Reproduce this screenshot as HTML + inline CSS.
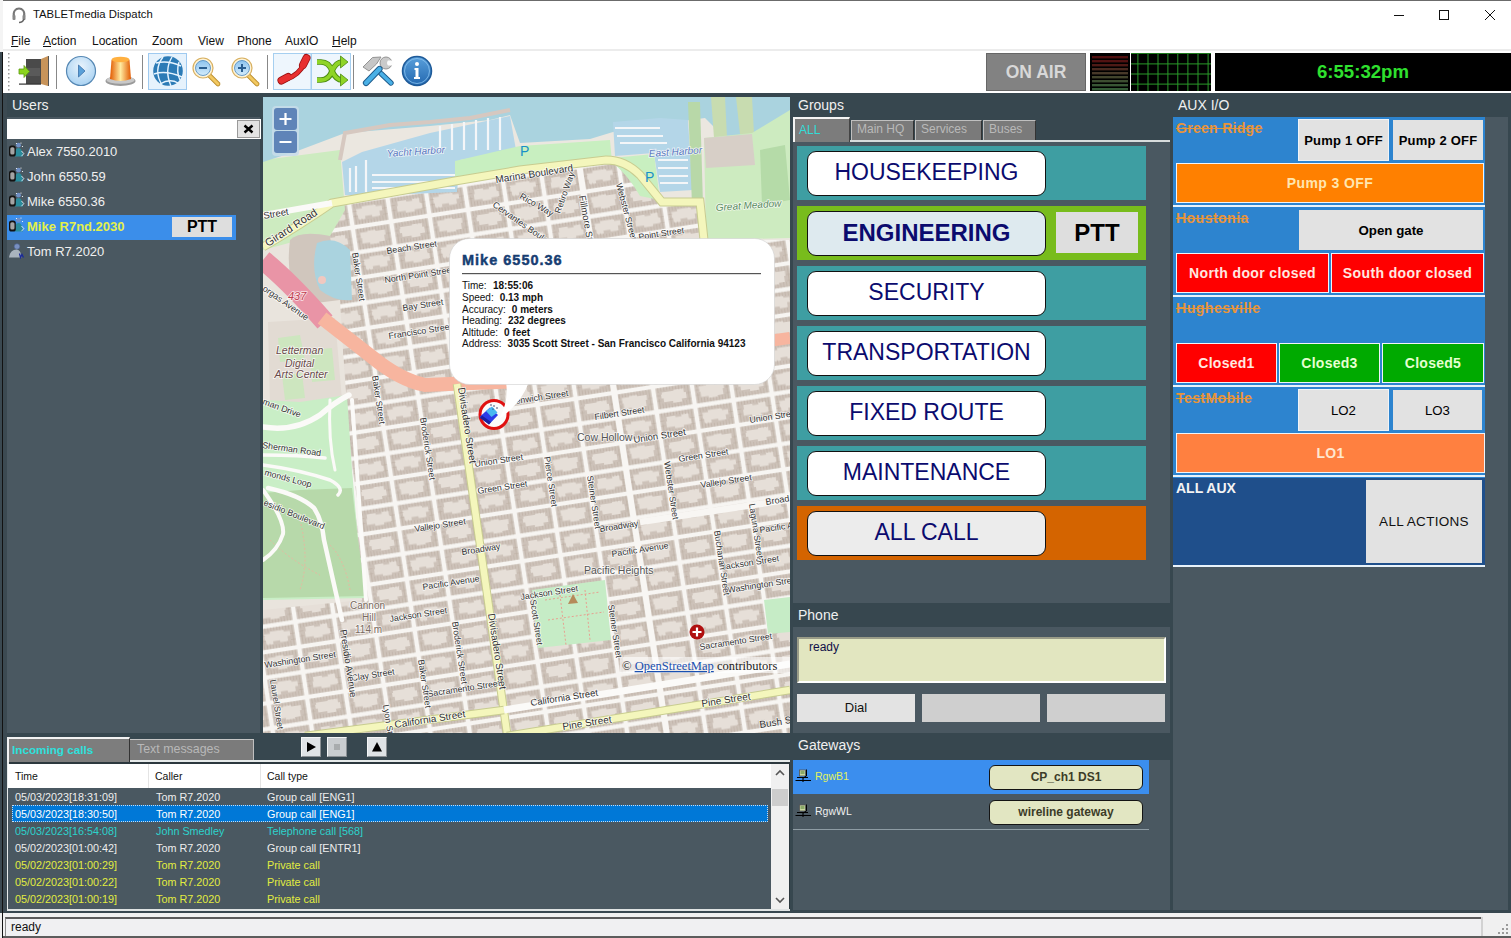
<!DOCTYPE html>
<html><head><meta charset="utf-8">
<style>
*{margin:0;padding:0;box-sizing:border-box}
html,body{width:1511px;height:938px;overflow:hidden;background:#3a4a52;font-family:"Liberation Sans",sans-serif}
.a{position:absolute}
.t{position:absolute;white-space:nowrap;line-height:1}
#win{position:absolute;left:3px;top:0;width:1508px;height:938px;background:#fff;border-top:1px solid #6b6b6b}
.hdr{position:absolute;background:#37474f;color:#f2f2f2;font-size:13px}
.pnl{position:absolute;background:#4a5861}
.gbtn{position:absolute;background:#fff;border:1px solid #111;border-radius:9px;color:#0b0b6e;font-size:23px;text-align:center}
.grow{position:absolute;left:797px;width:349px;height:54px;background:#3c9ea0}
.aux{position:absolute;font-family:"Liberation Sans",sans-serif;font-weight:bold;font-size:13px;text-align:center}
.lbl{position:absolute;color:#e8943a;font-weight:bold;font-size:13px;text-decoration:line-through;white-space:nowrap}
.row{position:absolute;left:8px;width:762px;height:17px;font-size:10px;color:#f0f0f0}
.row span{position:absolute;top:3px;white-space:nowrap}
</style></head><body>
<div id="win"></div>
<!-- left outside strip -->
<div class="a" style="left:0;top:0;width:3px;height:52px;background:#f4f4f4"></div>
<div class="a" style="left:0;top:52px;width:2px;height:861px;background:#3b4951"></div><div class="a" style="left:0;top:913px;width:2px;height:25px;background:#eeeeee"></div><div class="a" style="left:2px;top:52px;width:1px;height:886px;background:#121212"></div>

<!-- title bar -->
<svg class="a" style="left:11px;top:7px" width="16" height="17" viewBox="0 0 16 17">
<path d="M3 10 C1.5 4 5 1.5 8 1.5 C11 1.5 14.5 4 13 10" fill="none" stroke="#777" stroke-width="2"/>
<rect x="1.5" y="8" width="3" height="5" rx="1" fill="#888"/><rect x="11.5" y="8" width="3" height="5" rx="1" fill="#888"/>
<path d="M13 12 C12 15 10 15.5 8 15.5" fill="none" stroke="#666" stroke-width="1.5"/>
</svg>
<div class="t" style="left:33px;top:9px;font-size:11.3px;color:#111">TABLETmedia Dispatch</div>
<div class="a" style="left:1394px;top:15px;width:10px;height:1px;background:#111"></div>
<div class="a" style="left:1439px;top:10px;width:10px;height:10px;border:1px solid #111"></div>
<svg class="a" style="left:1484px;top:9px" width="13" height="13"><path d="M1 1L11 11M11 1L1 11" stroke="#111" stroke-width="1"/></svg>

<!-- menu -->
<div class="t" style="left:11px;top:35px;font-size:12px;color:#111"><u>F</u>ile</div>
<div class="t" style="left:43px;top:35px;font-size:12px;color:#111"><u>A</u>ction</div>
<div class="t" style="left:92px;top:35px;font-size:12px;color:#111">Location</div>
<div class="t" style="left:152px;top:35px;font-size:12px;color:#111">Zoom</div>
<div class="t" style="left:198px;top:35px;font-size:12px;color:#111">View</div>
<div class="t" style="left:237px;top:35px;font-size:12px;color:#111">Phone</div>
<div class="t" style="left:285px;top:35px;font-size:12px;color:#111">AuxIO</div>
<div class="t" style="left:332px;top:35px;font-size:12px;color:#111"><u>H</u>elp</div>
<div class="a" style="left:3px;top:49px;width:1508px;height:2px;background:#ececec"></div>

<!-- toolbar -->
<svg class="a" style="left:0;top:51px" width="440" height="41" viewBox="0 51 440 41">
<defs>
<radialGradient id="gPlay" cx="0.5" cy="0.35" r="0.65"><stop offset="0" stop-color="#e8f3fc"/><stop offset="1" stop-color="#a9d2f2"/></radialGradient>
<linearGradient id="gAl" x1="0" x2="1"><stop offset="0" stop-color="#e25a00"/><stop offset="0.5" stop-color="#ffeaa0"/><stop offset="1" stop-color="#e25a00"/></linearGradient>
<linearGradient id="gLens" x1="0" y1="0" x2="0" y2="1"><stop offset="0" stop-color="#8ec4ef"/><stop offset="1" stop-color="#d2ebfb"/></linearGradient>
<linearGradient id="gInfo" x1="0" y1="0" x2="0" y2="1"><stop offset="0" stop-color="#5aa0dc"/><stop offset="1" stop-color="#2368b0"/></linearGradient>
</defs>
<g fill="#9a9a9a"><rect x="8" y="53" width="1.5" height="1.5"/><rect x="8" y="57" width="1.5" height="1.5"/><rect x="8" y="61" width="1.5" height="1.5"/><rect x="8" y="65" width="1.5" height="1.5"/><rect x="8" y="69" width="1.5" height="1.5"/><rect x="8" y="73" width="1.5" height="1.5"/><rect x="8" y="77" width="1.5" height="1.5"/><rect x="8" y="81" width="1.5" height="1.5"/><rect x="8" y="85" width="1.5" height="1.5"/><rect x="8" y="89" width="1.5" height="1.5"/></g>
<!-- door -->
<rect x="26" y="59" width="15" height="25" fill="#4a4a4a"/>
<rect x="27" y="68" width="13" height="8" fill="#5a5a5a"/>
<path d="M41 59 L48 56 L48 86 L41 84 Z" fill="#c8945a"/>
<path d="M48 56 L49 56 L49 86 L48 86Z" fill="#555"/>
<rect x="19" y="83.5" width="22" height="1.2" fill="#333"/>
<path d="M19 69 L24 69 L24 65.5 L29.5 71.5 L24 77.5 L24 74 L19 74 Z" fill="#8cd41e" stroke="#5a9a10" stroke-width="0.8"/>
<rect x="56" y="55" width="1" height="34" fill="#888"/>
<!-- play -->
<circle cx="81" cy="71" r="14.5" fill="url(#gPlay)" stroke="#5688b4" stroke-width="1.2"/>
<path d="M78.5 65 L85 71 L78.5 77 Z" fill="#5aa0d8" stroke="#3a70a8" stroke-width="0.8"/>
<!-- alarm -->
<ellipse cx="120.5" cy="81" rx="15" ry="5" fill="#9a9a9a"/>
<ellipse cx="120.5" cy="80" rx="14" ry="3.8" fill="#c8c8c8"/>
<path d="M110 79 L111.5 60 Q120.5 55 129.5 60 L131 79 Q120.5 83 110 79Z" fill="url(#gAl)"/>
<ellipse cx="120.5" cy="59.5" rx="9" ry="2.8" fill="#ffb040"/>
<rect x="142" y="55" width="1" height="34" fill="#888"/>
<!-- globe box -->
<rect x="148.5" y="53.5" width="38" height="36" fill="#e6f2fc" stroke="#9fcaf0"/>
<circle cx="168" cy="71" r="14.8" fill="#2c7bb6"/>
<g fill="none" stroke="#e6f4ff" stroke-width="1.4">
<path d="M156 63 Q168 60 181 66"/><path d="M154 74 Q166 70 182 77"/><path d="M160 84 Q170 78 178 83"/>
<path d="M163 57 Q153 70 162 85"/><path d="M172 57 Q164 70 171 86"/><path d="M179 62 Q176 72 180 80"/>
</g>
<!-- zoom out -->
<path d="M208.5 74.5 L218 84" stroke="#b88a28" stroke-width="4.6" stroke-linecap="round"/>
<path d="M208.5 74.5 L218 84" stroke="#f2c860" stroke-width="3" stroke-linecap="round"/>
<circle cx="203" cy="68" r="10" fill="#fdf3d8" stroke="#d8b060" stroke-width="1.2"/>
<circle cx="203" cy="68" r="7.5" fill="url(#gLens)" stroke="#4a88c0" stroke-width="0.8"/>
<rect x="199" y="67" width="8" height="2" fill="#2a5e90"/>
<!-- zoom in -->
<path d="M247.5 74.5 L257 84" stroke="#b88a28" stroke-width="4.6" stroke-linecap="round"/>
<path d="M247.5 74.5 L257 84" stroke="#f2c860" stroke-width="3" stroke-linecap="round"/>
<circle cx="242" cy="68" r="10" fill="#fdf3d8" stroke="#d8b060" stroke-width="1.2"/>
<circle cx="242" cy="68" r="7.5" fill="url(#gLens)" stroke="#4a88c0" stroke-width="0.8"/>
<rect x="238" y="67" width="8" height="2" fill="#2a5e90"/><rect x="241" y="64" width="2" height="8" fill="#2a5e90"/>
<rect x="267" y="55" width="1" height="34" fill="#888"/>
<!-- phone/shuffle boxes -->
<rect x="273.5" y="53.5" width="37.5" height="36" fill="#eef6fd" stroke="#a6cff0"/>
<rect x="311.5" y="53.5" width="39" height="36" fill="#eef6fd" stroke="#a6cff0"/>
<g stroke-linecap="round" fill="none">
<path d="M285 79.5 Q299 76 305 62" stroke="#9a1010" stroke-width="5"/>
<path d="M281.5 80.5 L288 77" stroke="#9a1010" stroke-width="8"/>
<path d="M303 65 L306.5 58" stroke="#9a1010" stroke-width="8"/>
<path d="M285 79.5 Q299 76 305 62" stroke="#e83030" stroke-width="3.4"/>
<path d="M281.5 80.5 L288 77" stroke="#e83030" stroke-width="6.4"/>
<path d="M303 65 L306.5 58" stroke="#e83030" stroke-width="6.4"/>
</g>
<g fill="none" stroke-linecap="butt">
<path d="M317 62 H321 Q329 62 332 71 Q336 80 342 80" stroke="#4a8a10" stroke-width="5.6"/>
<path d="M317 80 H321 Q329 80 332 71 Q336 62 342 62" stroke="#4a8a10" stroke-width="5.6"/>
<path d="M317 62 H321 Q329 62 332 71 Q336 80 342 80" stroke="#8fd426" stroke-width="3.8"/>
<path d="M317 80 H321 Q329 80 332 71 Q336 62 342 62" stroke="#8fd426" stroke-width="3.8"/>
</g>
<path d="M340.5 56 L348 62 L340.5 68 Z M340.5 74 L348 80 L340.5 86 Z" fill="#8fd426" stroke="#4a8a10" stroke-width="0.8"/>
<rect x="353" y="55" width="1" height="34" fill="#888"/>
<!-- tools -->
<path d="M386.5 64 Q382 60 384 58" fill="none" stroke="#888" stroke-width="0.8"/>
<circle cx="386" cy="63" r="6" fill="#cacaca" stroke="#8a8a8a" stroke-width="0.9"/>
<path d="M388 60.5 L393.5 60.5 L393.5 65.5 L388 65.5 Q386 63 388 60.5Z" fill="#fdfdfd"/>
<path d="M381 73.5 L391 83" stroke="#1e5a8a" stroke-width="5.4" stroke-linecap="round"/>
<path d="M381 73.5 L391 83" stroke="#4ab0e6" stroke-width="3.6" stroke-linecap="round"/>
<path d="M366 83 L379.5 69" stroke="#1e5a8a" stroke-width="6.2" stroke-linecap="round"/>
<path d="M366 83 L379.5 69" stroke="#4ab0e6" stroke-width="4.4" stroke-linecap="round"/>
<path d="M363 67 L372.5 57.5 L381 57 L376.5 64 L369 71 Z" fill="#c6c6c6" stroke="#8a8a8a" stroke-width="0.9"/>
<!-- info -->
<circle cx="417" cy="71" r="14.5" fill="url(#gInfo)" stroke="#1e5a98" stroke-width="1.5"/>
<circle cx="417" cy="71" r="12.5" fill="none" stroke="#8cc4f0" stroke-width="0.8"/>
<circle cx="417" cy="64" r="2" fill="#fff"/>
<path d="M414.5 68 L418.5 68 L418.5 77 L420 77 L420 79 L414 79 L414 77 L415.5 77 L415.5 70 L414.5 70Z" fill="#fff"/>
</svg>

<!-- ON AIR / meters / clock -->
<div class="a" style="left:986px;top:53px;width:100px;height:38px;background:#828282;border:1px solid #666;color:#d8d8d8;font-weight:bold;font-size:17.5px;text-align:center;line-height:36px">ON AIR</div>
<svg class="a" style="left:1090px;top:53px" width="40" height="38"><rect width="40" height="38" fill="#000"/><rect x="2" y="3" width="36" height="2.4" fill="#4e0e0e"/><rect x="2" y="7" width="36" height="2.4" fill="#521212"/><rect x="2" y="11" width="36" height="2.4" fill="#4e1a16"/><rect x="2" y="15" width="36" height="2.4" fill="#4a2a20"/><rect x="2" y="19" width="36" height="2.4" fill="#463828"/><rect x="2" y="23" width="36" height="2.4" fill="#42442c"/><rect x="2" y="27" width="36" height="2.4" fill="#3c4e30"/><rect x="2" y="31" width="36" height="2.4" fill="#385634"/><rect x="2" y="35" width="36" height="2.4" fill="#345c36"/></svg>
<svg class="a" style="left:1131px;top:53px" width="80" height="38"><rect width="80" height="38" fill="#000"/><rect x="6.4" y="0" width="1" height="38" fill="#2a9a2a"/><rect x="16.5" y="0" width="1" height="38" fill="#2a9a2a"/><rect x="26.5" y="0" width="1" height="38" fill="#2a9a2a"/><rect x="36.4" y="0" width="1" height="38" fill="#2a9a2a"/><rect x="46.3" y="0" width="1" height="38" fill="#2a9a2a"/><rect x="56.4" y="0" width="1" height="38" fill="#2a9a2a"/><rect x="66.5" y="0" width="1" height="38" fill="#2a9a2a"/><rect x="76.6" y="0" width="1" height="38" fill="#2a9a2a"/><rect x="0" y="10.4" width="80" height="1" fill="#2a9a2a"/><rect x="0" y="20.5" width="80" height="1" fill="#2a9a2a"/><rect x="0" y="30.6" width="80" height="1" fill="#2a9a2a"/><rect x="0" y="0" width="80" height="1" fill="#1f7a1f"/></svg>
<div class="a" style="left:1215px;top:53px;width:296px;height:38px;background:#000;color:#2fe02f;font-weight:bold;font-size:18.6px;text-align:center;line-height:38px;padding-right:0">6:55:32pm</div>

<!-- main dark area -->

<div class="a" style="left:3px;top:93px;width:1508px;height:820px;background:#37474f"></div><div class="a" style="left:3px;top:93px;width:4px;height:820px;background:#3c4a52"></div>

<!-- Users panel -->
<div class="t" style="left:12px;top:98px;font-size:14px;color:#f0f0f0">Users</div>
<div class="pnl" style="left:7px;top:117px;width:253px;height:616px"></div>
<div class="a" style="left:7px;top:119px;width:254px;height:20px;background:#fff"></div>
<div class="a" style="left:237px;top:120px;width:23px;height:18px;background:#e4e4e4;border:1px solid #9a9a9a"></div>
<svg class="a" style="left:243px;top:124px" width="11" height="10"><path d="M1.5 1.5L9.5 8.5M9.5 1.5L1.5 8.5" stroke="#000" stroke-width="2.4"/></svg>
<div class="a" style="left:7px;top:215px;width:229px;height:25px;background:#3b8eea"></div>
<div class="a" style="left:172px;top:217px;width:60px;height:20px;background:#dedede;color:#000;font-weight:bold;font-size:16px;text-align:center;line-height:20px">PTT</div>
<svg class="a" style="left:8px;top:142px" width="17" height="17" viewBox="0 0 17 17">
<circle cx="10.5" cy="3.2" r="2.4" fill="#6f8fc4"/>
<path d="M6.5 14.5 Q6.5 6 10.5 6 Q14.5 6 15 14.5Z" fill="#2a8c9c"/>
<path d="M13.5 9 L15.8 11.6 L13.5 14.2" fill="none" stroke="#e6eefa" stroke-width="0.9"/>
<rect x="1" y="3.5" width="6.8" height="11" rx="2.6" fill="#121212"/>
<rect x="2.3" y="5.2" width="4.2" height="7.3" rx="1.6" fill="#a4a4a4"/>
<circle cx="8.5" cy="1.5" r="0.6" fill="#fff"/><circle cx="13" cy="1" r="0.6" fill="#fff"/><circle cx="14.5" cy="4.5" r="0.6" fill="#fff"/>
</svg>
<div class="t" style="left:27px;top:145px;font-size:13px;color:#f0f0f0">Alex 7550.2010</div>
<svg class="a" style="left:8px;top:167px" width="17" height="17" viewBox="0 0 17 17">
<circle cx="10.5" cy="3.2" r="2.4" fill="#6f8fc4"/>
<path d="M6.5 14.5 Q6.5 6 10.5 6 Q14.5 6 15 14.5Z" fill="#2a8c9c"/>
<path d="M13.5 9 L15.8 11.6 L13.5 14.2" fill="none" stroke="#e6eefa" stroke-width="0.9"/>
<rect x="1" y="3.5" width="6.8" height="11" rx="2.6" fill="#121212"/>
<rect x="2.3" y="5.2" width="4.2" height="7.3" rx="1.6" fill="#a4a4a4"/>
<circle cx="8.5" cy="1.5" r="0.6" fill="#fff"/><circle cx="13" cy="1" r="0.6" fill="#fff"/><circle cx="14.5" cy="4.5" r="0.6" fill="#fff"/>
</svg>
<div class="t" style="left:27px;top:170px;font-size:13px;color:#f0f0f0">John 6550.59</div>
<svg class="a" style="left:8px;top:192px" width="17" height="17" viewBox="0 0 17 17">
<circle cx="10.5" cy="3.2" r="2.4" fill="#6f8fc4"/>
<path d="M6.5 14.5 Q6.5 6 10.5 6 Q14.5 6 15 14.5Z" fill="#2a8c9c"/>
<path d="M13.5 9 L15.8 11.6 L13.5 14.2" fill="none" stroke="#e6eefa" stroke-width="0.9"/>
<rect x="1" y="3.5" width="6.8" height="11" rx="2.6" fill="#121212"/>
<rect x="2.3" y="5.2" width="4.2" height="7.3" rx="1.6" fill="#a4a4a4"/>
<circle cx="8.5" cy="1.5" r="0.6" fill="#fff"/><circle cx="13" cy="1" r="0.6" fill="#fff"/><circle cx="14.5" cy="4.5" r="0.6" fill="#fff"/>
</svg>
<div class="t" style="left:27px;top:195px;font-size:13px;color:#f0f0f0">Mike 6550.36</div>
<svg class="a" style="left:8px;top:217px" width="17" height="17" viewBox="0 0 17 17">
<circle cx="10.5" cy="3.2" r="2.4" fill="#6f8fc4"/>
<path d="M6.5 14.5 Q6.5 6 10.5 6 Q14.5 6 15 14.5Z" fill="#2a8c9c"/>
<path d="M13.5 9 L15.8 11.6 L13.5 14.2" fill="none" stroke="#e6eefa" stroke-width="0.9"/>
<rect x="1" y="3.5" width="6.8" height="11" rx="2.6" fill="#121212"/>
<rect x="2.3" y="5.2" width="4.2" height="7.3" rx="1.6" fill="#a4a4a4"/>
<circle cx="8.5" cy="1.5" r="0.6" fill="#fff"/><circle cx="13" cy="1" r="0.6" fill="#fff"/><circle cx="14.5" cy="4.5" r="0.6" fill="#fff"/>
</svg>
<div class="t" style="left:27px;top:220px;font-size:13px;font-weight:bold;color:#e4f04a">Mike R7nd.2030</div>
<svg class="a" style="left:8px;top:242px" width="17" height="17" viewBox="0 0 17 17">
<circle cx="9" cy="4.5" r="2.8" fill="#7890c0" stroke="#4a6090" stroke-width="0.6"/>
<path d="M1 15.5 Q2 8 8.5 7.5 Q13 8 13.5 15.5Z" fill="#aab4be"/>
<path d="M11.5 11.5 L12.5 15.5 L14 12.5 L15.5 15.5" fill="none" stroke="#1a2a9a" stroke-width="1.3"/>
</svg>
<div class="t" style="left:27px;top:245px;font-size:13px;color:#f0f0f0">Tom R7.2020</div>

<!-- Map -->
<!--MAP-->
<svg class="a" style="left:263px;top:97px" width="527" height="636" viewBox="263 97 527 636" font-family="Liberation Sans, sans-serif">
<defs>
<pattern id="blk" patternUnits="userSpaceOnUse" width="77.8" height="50.8" patternTransform="translate(622 443) rotate(-8.75)">
<rect width="77.8" height="50.8" fill="#f7f5f2"/>
<rect x="2.3" y="2.2" width="34.3" height="21.0" fill="#cdc2b9"/>
<path transform="translate(0 0)" d="M6.5 6.5 H14 V5.5 H22 V7 H31.5 V12 H30 V18 H24 V19.5 H15 V17.5 H7.5 V12 H6.5Z" fill="#e6dfd8"/>
<path transform="translate(0 0)" d="M4.5 2.2 V7 M7.5 2.2 V6 M10.5 2.2 V6 M13.5 2.2V5.5 M16.5 2.2V5.5 M19.5 2.2V5.5 M22.5 2.2V6 M25.5 2.2V6.5 M28.5 2.2V6.5 M31.5 2.2V6.5 M34.5 2.2V23.2 M4.5 13V23.2 M7.5 18V23.2 M10.5 18V23.2 M13.5 19V23.2 M16.5 19.5V23.2 M19.5 19.5V23.2 M22.5 19.5V23.2 M25.5 19V23.2 M28.5 18V23.2 M31.5 18V23.2 M2.5 10 H6.5 M2.5 15 H6.5 M32 11 H36.5 M32 17 H36.5" stroke="#bdafa4" stroke-width="0.6"/>
<rect x="41.2" y="2.2" width="34.3" height="21.0" fill="#cdc2b9"/>
<path transform="translate(38.9 0)" d="M8 7 H20 V6 H30 V10 H32 V16 H27 V19 H18 V17 H9 V13 H7 V9 H8Z" fill="#e6dfd8"/>
<path transform="translate(38.9 0)" d="M4.5 2.2 V7 M7.5 2.2 V6 M10.5 2.2 V6 M13.5 2.2V5.5 M16.5 2.2V5.5 M19.5 2.2V5.5 M22.5 2.2V6 M25.5 2.2V6.5 M28.5 2.2V6.5 M31.5 2.2V6.5 M34.5 2.2V23.2 M4.5 13V23.2 M7.5 18V23.2 M10.5 18V23.2 M13.5 19V23.2 M16.5 19.5V23.2 M19.5 19.5V23.2 M22.5 19.5V23.2 M25.5 19V23.2 M28.5 18V23.2 M31.5 18V23.2 M2.5 10 H6.5 M2.5 15 H6.5 M32 11 H36.5 M32 17 H36.5" stroke="#bdafa4" stroke-width="0.6"/>
<rect x="2.3" y="27.6" width="34.3" height="21.0" fill="#cdc2b9"/>
<path transform="translate(0 25.4)" d="M6 8 H12 V6 H26 V8 H32 V13 H29 V18 H21 V16 H14 V19 H7 V14 H6Z" fill="#e6dfd8"/>
<path transform="translate(0 25.4)" d="M4.5 2.2 V7 M7.5 2.2 V6 M10.5 2.2 V6 M13.5 2.2V5.5 M16.5 2.2V5.5 M19.5 2.2V5.5 M22.5 2.2V6 M25.5 2.2V6.5 M28.5 2.2V6.5 M31.5 2.2V6.5 M34.5 2.2V23.2 M4.5 13V23.2 M7.5 18V23.2 M10.5 18V23.2 M13.5 19V23.2 M16.5 19.5V23.2 M19.5 19.5V23.2 M22.5 19.5V23.2 M25.5 19V23.2 M28.5 18V23.2 M31.5 18V23.2 M2.5 10 H6.5 M2.5 15 H6.5 M32 11 H36.5 M32 17 H36.5" stroke="#bdafa4" stroke-width="0.6"/>
<rect x="41.2" y="27.6" width="34.3" height="21.0" fill="#cdc2b9"/>
<path transform="translate(38.9 25.4)" d="M9 6.5 H18 V8 H24 V6 H31 V11 H33 V17 H25 V19 H16 V17 H8 V11 H9Z" fill="#e6dfd8"/>
<path transform="translate(38.9 25.4)" d="M4.5 2.2 V7 M7.5 2.2 V6 M10.5 2.2 V6 M13.5 2.2V5.5 M16.5 2.2V5.5 M19.5 2.2V5.5 M22.5 2.2V6 M25.5 2.2V6.5 M28.5 2.2V6.5 M31.5 2.2V6.5 M34.5 2.2V23.2 M4.5 13V23.2 M7.5 18V23.2 M10.5 18V23.2 M13.5 19V23.2 M16.5 19.5V23.2 M19.5 19.5V23.2 M22.5 19.5V23.2 M25.5 19V23.2 M28.5 18V23.2 M31.5 18V23.2 M2.5 10 H6.5 M2.5 15 H6.5 M32 11 H36.5 M32 17 H36.5" stroke="#bdafa4" stroke-width="0.6"/>
</pattern>
</defs>
<!-- base city -->
<rect x="263" y="97" width="527" height="636" fill="url(#blk)"/>

<!-- Presidio / Letterman area left -->
<path d="M263 250 L300 238 L330 236 L340 300 L343 350 L348 420 L354 500 L362 600 L263 610 Z" fill="#e9e4dd"/>
<path d="M268 322 L335 318 L342 400 L270 405Z" fill="#e2dbd3"/>
<path d="M278 338 L300 335 L305 360 L280 362Z M310 350 L332 348 L335 380 L312 382Z M282 375 L302 373 L305 398 L285 400Z" fill="#cde6bf"/>
<path d="M263 400 L300 402 L347 395 L352 470 L358 540 L365 598 L263 600 Z" fill="#c9eec6"/>
<path d="M263 493 L300 490 L352 488 L358 540 L366 596 L263 598 Z" fill="#b7d9aa"/>
<path d="M300 520 Q310 560 300 590 M270 540 Q290 560 320 575 M330 545 Q345 560 350 590" fill="none" stroke="#e8b8a0" stroke-width="1" stroke-dasharray="2 2"/>
<g fill="none" stroke="#fbfaf8" stroke-linecap="round">
<path d="M263 427 Q295 432 320 415 Q335 402 349 395" stroke-width="5.5"/>
<path d="M263 455 Q300 455 325 458" stroke-width="3.5"/>
<path d="M263 465 Q300 470 330 480 Q345 488 338 495" stroke-width="3.5"/>
<path d="M268 488 Q300 495 314 508 Q322 520 324 540 L342 620" stroke-width="4.5"/>
<path d="M263 490 Q285 520 283 534 Q278 550 263 560" stroke-width="4"/>
<path d="M330 400 Q328 440 335 470" stroke-width="3"/>
<path d="M352 400 L366 600" stroke-width="4"/>
</g>
<path d="M263 150 L345 128 L430 120 L510 108 L520 140 L613 128 L705 112 L790 110 L790 240 L704 240 L700 202 L662 202 L640 175 L606 160 L520 170 L455 181 L332 203 L263 215 Z" fill="#ebe7e0"/>
<!-- top-left park and palace of fine arts -->
<path d="M263 160 L340 150 L345 210 L330 236 L300 240 L263 250 Z" fill="#cdebc0"/>
<path d="M290 240 Q300 230 330 236 L340 300 L300 305 Q285 280 290 240Z" fill="#d0c6bd"/>
<path d="M317 243 Q335 235 350 250 L352 300 Q335 302 320 290 Q310 270 317 243Z" fill="#aad3df"/>
<circle cx="322" cy="280" r="4" fill="#f0c8c0"/>

<!-- water top -->
<path d="M263 97 H790 V140 L752 134 L725 138 L705 118 L690 120 L613 132 L590 139 L520 143 L510 115 L490 120 L430 126 L345 133 L300 150 L263 162 Z" fill="#aad3df"/>
<!-- yacht harbor -->
<path d="M342 162 L362 152 L430 133 L510 116 L516 150 L460 160 L457 192 L362 196 L345 195 Z" fill="#b4d6e8"/>
<g stroke="#f4f6f8" stroke-width="2.2">
<path d="M372 175 H455 M372 182 H455 M372 188 H455 M440 126 V150 M452 124 V150 M464 122 V150 M476 120 V150 M488 118 V150 M500 117 V150 M350 168 V192 M356 166 V192 M366 160 V192"/>
</g>
<path d="M340 160 L345 133 L390 125 L430 122 L470 118 L510 110" fill="none" stroke="#d6c8c0" stroke-width="4"/>
<!-- marina green -->
<path d="M455 161 L520 146 L610 140 L612 162 L455 180 Z" fill="#c8efc0"/>
<!-- east harbor -->
<path d="M613 122 L660 118 L688 120 L690 152 L654 153 L615 156 Z" fill="#b4d6e8"/>
<path d="M654 154 L690 152 L693 190 L660 192 Z" fill="#b4d6e8"/>
<path d="M612 158 L654 154 L660 200 L640 196 Q628 175 612 162Z" fill="#c8efc0"/>
<g stroke="#f4f6f8" stroke-width="2.2"><path d="M615 128 H660 M617 136 H663 M620 143 H667 M658 160 H688 M658 168 H688 M659 176 H688 M660 183 H688"/></g>
<path d="M688 102 L700 102 L703 205 L692 205Z" fill="#b8d8a8"/>
<path d="M711 97 L725 97 L727 138 L714 138Z" fill="#c8dcb0"/>
<path d="M736 97 L752 97 L754 134 L740 134Z" fill="#c8dcb0"/>
<!-- great meadow -->
<path d="M704 138 L752 133 L790 110 V238 L706 240 Z" fill="#cdebc0"/>
<path d="M704 138 L752 134 L755 165 L706 168Z" fill="#d7cfc7"/>
<path d="M760 150 L785 145 L790 200 L762 205Z" fill="#b5dba8"/>

<!-- street grid lighter strips + Fillmore -->
<path d="M579.5 167 L666.7 733" stroke="#f8f6f3" stroke-width="6"/>
<path d="M640 522 L790 499.5" stroke="#f8f6f3" stroke-width="6.5"/>
<!-- route 437 -->
<path d="M263 260 Q290 282 325 322" fill="none" stroke="#e994a6" stroke-width="20"/>
<path d="M322 318 L372 357 Q400 380 425 385 L520 381" fill="none" stroke="#f7b59f" stroke-width="14"/>
<path d="M740 345 L790 338" stroke="#f7b59f" stroke-width="12"/>
<!-- Marina blvd / Girard -->
<path d="M263 247 Q300 225 332 203 L455 181 L520 170 L606 160 Q625 160 640 175 L662 202 L700 202 L704 240" fill="none" stroke="#c8cc90" stroke-width="9"/>
<path d="M263 247 Q300 225 332 203 L455 181 L520 170 L606 160 Q625 160 640 175 L662 202 L700 202 L704 240" fill="none" stroke="#f4f6bc" stroke-width="7"/>
<path d="M263 215 L332 203" stroke="#fbfaf8" stroke-width="6"/>
<!-- Divisadero -->
<path d="M457 384 L507 733" stroke="#c8cc90" stroke-width="8.5"/>
<path d="M457 384 L507 733" stroke="#f4f6bc" stroke-width="6.5"/>
<!-- California / Pine -->
<path d="M305 736 L504 710" stroke="#c8cc90" stroke-width="8.5"/>
<path d="M305 736 L504 710" stroke="#f4f6bc" stroke-width="6.5"/>
<path d="M504 710 L790 664" stroke="#fbfaf8" stroke-width="7"/>
<path d="M507 736 L790 690" stroke="#c8cc90" stroke-width="8.5"/>
<path d="M507 736 L790 690" stroke="#f4f6bc" stroke-width="6.5"/>
<!-- Alta plaza -->
<path d="M532 590 L605 580 L611 640 L538 648 Z" fill="#c6ecc6"/>
<path d="M545 600 L600 592 M548 620 L604 612 M560 595 L566 645 M585 590 L590 640" stroke="#e8a090" stroke-width="1" stroke-dasharray="2 2" fill="none"/>
<path d="M568 604 L573 594 L578 603Z" fill="#b58a5a"/>
<path d="M764 600 L790 597 V632 L768 634Z" fill="#c6ecc6"/>
<!-- hospital -->
<circle cx="697" cy="632" r="7.5" fill="#b01010"/>
<path d="M697 627.5 V636.5 M692.5 632 H701.5" stroke="#fff" stroke-width="2.2"/>

<!-- labels -->
<g fill="#333" stroke="#fff" stroke-width="1.6" stroke-opacity="0.75" paint-order="stroke">
<text transform="translate(496 183) rotate(-8.75)" font-size="10">Marina Boulevard</text>
<text transform="translate(268 247) rotate(-33)" font-size="11">Girard Road</text>
<text transform="translate(264 219) rotate(-10)" font-size="9.5">Street</text>
<text transform="translate(387 254) rotate(-8.75)" font-size="8.8">Beach Street</text>
<text transform="translate(385 283) rotate(-8.75)" font-size="8.8">North Point Stree</text>
<text transform="translate(403 311) rotate(-8.75)" font-size="8.8">Bay Street</text>
<text transform="translate(389 339) rotate(-8.75)" font-size="8.8">Francisco Street</text>
<text transform="translate(639 240) rotate(-8.75)" font-size="8.8">Point Street</text>
<text transform="translate(516 404) rotate(-8.75)" font-size="8.8">enwich Street</text>
<text transform="translate(595 420) rotate(-8.75)" font-size="8.8">Filbert Street</text>
<text transform="translate(750 423) rotate(-8.75)" font-size="8.8">Union Street</text>
<text transform="translate(634 443) rotate(-8.75)" font-size="9.5">Union Street</text>
<text transform="translate(577 441) rotate(0)" font-size="10.5" fill="#555">Cow Hollow</text>
<text transform="translate(475 467) rotate(-8.75)" font-size="8.8">Union Street</text>
<text transform="translate(478 494) rotate(-8.75)" font-size="8.8">Green Street</text>
<text transform="translate(679 462) rotate(-8.75)" font-size="8.8">Green Street</text>
<text transform="translate(701 488) rotate(-8.75)" font-size="8.8">Vallejo Street</text>
<text transform="translate(766 505) rotate(-8.75)" font-size="9">Broad</text>
<text transform="translate(415 532) rotate(-8.75)" font-size="8.8">Vallejo Street</text>

<text transform="translate(600 532) rotate(-8.75)" font-size="8.8">Broadway</text>
<text transform="translate(462 555) rotate(-8.75)" font-size="8.8">Broadway</text>
<text transform="translate(760 533) rotate(-8.75)" font-size="8.8">Pacific A</text>
<text transform="translate(612 557) rotate(-8.75)" font-size="8.8">Pacific Avenue</text>
<text transform="translate(584 574) rotate(0)" font-size="10.5" fill="#555">Pacific Heights</text>
<text transform="translate(722 570) rotate(-8.75)" font-size="8.8">Jackson Street</text>
<text transform="translate(728 593) rotate(-8.75)" font-size="8.8">Washington Stre</text>
<text transform="translate(423 590) rotate(-8.75)" font-size="8.8">Pacific Avenue</text>
<text transform="translate(521 600) rotate(-8.75)" font-size="8.8">Jackson Street</text>
<text transform="translate(390 622) rotate(-8.75)" font-size="8.8">Jackson Street</text>
<text transform="translate(265 668) rotate(-8.75)" font-size="8.8">Washington Street</text>
<text transform="translate(352 681) rotate(-8.75)" font-size="8.8">Clay Street</text>
<text transform="translate(428 697) rotate(-8.75)" font-size="8.8">Sacramento Street</text>
<text transform="translate(700 650) rotate(-8.75)" font-size="8.8">Sacramento Street</text>
<text transform="translate(395 728) rotate(-8.75)" font-size="10">California Street</text>
<text transform="translate(531 706) rotate(-8.75)" font-size="9.5">California Street</text>
<text transform="translate(563 730) rotate(-8.75)" font-size="10">Pine Street</text>
<text transform="translate(702 707) rotate(-8.75)" font-size="10">Pine Street</text>
<text transform="translate(760 728) rotate(-8.75)" font-size="10">Bush S</text>
<text transform="translate(458 388) rotate(81.25)" font-size="10">Divisadero Street</text>
<text transform="translate(488 614) rotate(81.25)" font-size="10">Divisadero Street</text>
<text transform="translate(352 253) rotate(81.25)" font-size="8.8">Baker Street</text>
<text transform="translate(372 376) rotate(81.25)" font-size="8.8">Baker Street</text>
<text transform="translate(418 660) rotate(81.25)" font-size="8.8">Baker Street</text>
<text transform="translate(544 457) rotate(81.25)" font-size="8.8">Pierce Street</text>
<text transform="translate(587 476) rotate(81.25)" font-size="8.8">Steiner Street</text>
<text transform="translate(608 605) rotate(81.25)" font-size="8.8">Steiner Street</text>
<text transform="translate(530 600) rotate(81.25)" font-size="8.8">Scott Street</text>
<text transform="translate(664 462) rotate(81.25)" font-size="8.8">Webster Street</text>
<text transform="translate(616 184) rotate(75)" font-size="8.8">Webster Street</text>
<text transform="translate(579 196) rotate(80)" font-size="9.5">Fillmore St</text>
<text transform="translate(714 531) rotate(81.25)" font-size="8.8">Buchanan Street</text>
<text transform="translate(749 504) rotate(81.25)" font-size="8.8">Laguna Street</text>
<text transform="translate(452 622) rotate(81.25)" font-size="8.8">Broderick Street</text>
<text transform="translate(420 418) rotate(81.25)" font-size="8.8">Broderick Street</text>
<text transform="translate(340 630) rotate(81.25)" font-size="9.5">Presidio Avenue</text>
<text transform="translate(270 680) rotate(81.25)" font-size="8.8">Laurel Street</text>
<text transform="translate(383 705) rotate(81.25)" font-size="8.8">Lyon St</text>
<text transform="translate(519 198) rotate(30)" font-size="8.8">Rico Way</text>
<text transform="translate(492 206) rotate(35)" font-size="8.8">Cervantes Boule</text>
<text transform="translate(560 214) rotate(-70)" font-size="8.8">Retiro Way</text>
<text transform="translate(262 290) rotate(35)" font-size="8.8">orgas Avenue</text>
<text transform="translate(262 404) rotate(20)" font-size="8.8">man Drive</text>
<text transform="translate(262 448) rotate(8)" font-size="8.8">Sherman Road</text>
<text transform="translate(264 475) rotate(15)" font-size="8.8">monds Loop</text>
<text transform="translate(263 505) rotate(22)" font-size="8.8">esidio Boulevard</text>
<text transform="translate(276 354) rotate(0)" font-size="10.5" fill="#6a4a4a" font-style="italic">Letterman</text>
<text transform="translate(285 366.5) rotate(0)" font-size="10.5" fill="#6a4a4a" font-style="italic">Digital</text>
<text transform="translate(274.5 378) rotate(0)" font-size="10.5" fill="#6a4a4a" font-style="italic">Arts Center</text>
<text transform="translate(387 157) rotate(-4)" font-size="10" fill="#5a78c0" font-style="italic">Yacht Harbor</text>
<text transform="translate(649 157) rotate(-4)" font-size="10" fill="#5a78c0" font-style="italic">East Harbor</text>
<text transform="translate(716 211) rotate(-4)" font-size="10" fill="#5a8a60" font-style="italic">Great Meadow</text>
<text transform="translate(350 609) rotate(0)" font-size="10" fill="#7a6a60">Cannon</text>
<text transform="translate(362 621) rotate(0)" font-size="10" fill="#7a6a60">Hill</text>
<text transform="translate(355 633) rotate(0)" font-size="10" fill="#7a6a60">114 m</text>
<text transform="translate(288 300) rotate(0)" font-size="11" fill="#c04050" font-style="italic">437</text>
<text x="520" y="156" font-size="14" fill="#1890c8" stroke="none">P</text>
<text x="645" y="182" font-size="14" fill="#1890c8" stroke="none">P</text>
</g>
<!-- marker -->
<circle cx="494" cy="414.5" r="14" fill="#fbfbfb" stroke="#e01010" stroke-width="3"/>
<path d="M479.5 417 L490 407.5 L498 415 L489 424.5 Z" fill="#2a3ce8"/>
<path d="M480 418 L489 424.5 L491 422 L482 415.5Z" fill="#1a20a0"/>
<path d="M486 411 L492 406.5 L497.5 412.5 L491.5 417 Z" fill="#48b8f0"/>
<g fill="#101040"><circle cx="491" cy="405" r="0.7"/><circle cx="494" cy="406" r="0.7"/><circle cx="497" cy="408" r="0.7"/><circle cx="493" cy="409" r="0.6"/></g>
<!-- popup -->
<path d="M506 382 Q509 402 499 419 Q521 404 529 382Z" fill="#fff"/>
<rect x="449.5" y="238.5" width="325" height="146" rx="20" fill="#fff" stroke="#cfcfcf" stroke-width="0.6"/>
<text x="462" y="265" font-size="14.5" font-weight="bold" fill="#173e72" stroke="#173e72" stroke-width="0.45" letter-spacing="1.0">Mike 6550.36</text>
<rect x="462" y="273" width="299" height="1.2" fill="#555"/>
<g font-size="10" fill="#111">
<text x="462" y="289">Time:</text><text x="493" y="289" font-weight="bold">18:55:06</text>
<text x="462" y="301">Speed:</text><text x="499.7" y="301" font-weight="bold">0.13 mph</text>
<text x="462" y="313">Accuracy:</text><text x="511.8" y="313" font-weight="bold">0 meters</text>
<text x="462" y="324">Heading:</text><text x="508" y="324" font-weight="bold">232 degrees</text>
<text x="462" y="336">Altitude:</text><text x="504" y="336" font-weight="bold">0 feet</text>
<text x="462" y="347">Address:</text><text x="507.6" y="347" font-weight="bold">3035 Scott Street - San Francisco California 94123</text>
</g>
<!-- zoom control -->
<rect x="272" y="106" width="27" height="50" rx="4" fill="#c8dcea" opacity="0.85"/>
<rect x="274" y="108" width="23" height="22" rx="3" fill="#5f84b8"/>
<rect x="274" y="131" width="23" height="22" rx="3" fill="#5f84b8"/>
<path d="M285.5 113 V125 M279.5 119 H291.5 M279.5 142 H291.5" stroke="#fff" stroke-width="2.2"/>
<!-- attribution -->
<rect x="620" y="657" width="170" height="16" fill="#fff" opacity="0.6"/>
<text x="622" y="670" font-family="Liberation Serif, serif" font-size="12.5" fill="#222">© <tspan fill="#1a50b0" text-decoration="underline">OpenStreetMap</tspan> contributors</text>
</svg>

<!--/MAP-->

<!-- Groups -->
<div class="t" style="left:798px;top:98px;font-size:14px;color:#f0f0f0">Groups</div>
<div class="pnl" style="left:793px;top:142px;width:377px;height:461px"></div>
<div class="a" style="left:850px;top:140px;width:320px;height:2px;background:#d8dcdc"></div>
<div class="a" style="left:793px;top:117px;width:57px;height:25px;background:#7c7c7c;border-top:2px solid #f4f4f4;border-left:2px solid #f4f4f4;border-right:1px solid #444"></div>
<div class="t" style="left:799px;top:124px;font-size:12px;color:#31dcd8">ALL</div>
<div class="a" style="left:851px;top:120px;width:63px;height:20px;background:#7a7a7a;border-top:1px solid #bfbfbf;border-left:1px solid #bfbfbf;border-right:1px solid #333"></div>
<div class="t" style="left:857px;top:123px;font-size:12px;color:#b9b9b9">Main HQ</div>
<div class="a" style="left:915px;top:120px;width:67px;height:20px;background:#7a7a7a;border-top:1px solid #bfbfbf;border-left:1px solid #bfbfbf;border-right:1px solid #333"></div>
<div class="t" style="left:921px;top:123px;font-size:12px;color:#b9b9b9">Services</div>
<div class="a" style="left:983px;top:120px;width:53px;height:20px;background:#7a7a7a;border-top:1px solid #bfbfbf;border-left:1px solid #bfbfbf;border-right:1px solid #333"></div>
<div class="t" style="left:989px;top:123px;font-size:12px;color:#b9b9b9">Buses</div>
<div class="grow" style="top:146px;background:#3e9ea2"></div>
<div class="gbtn" style="left:807px;top:151px;width:239px;height:45px;background:#fff;line-height:41px;">HOUSEKEEPING</div>
<div class="grow" style="top:206px;background:#78bc1c"></div>
<div class="gbtn" style="left:807px;top:211px;width:239px;height:45px;background:#deeaef;line-height:41px;font-weight:bold;font-size:24px;">ENGINEERING</div>
<div class="grow" style="top:266px;background:#3e9ea2"></div>
<div class="gbtn" style="left:807px;top:271px;width:239px;height:45px;background:#fff;line-height:41px;">SECURITY</div>
<div class="grow" style="top:326px;background:#3e9ea2"></div>
<div class="gbtn" style="left:807px;top:331px;width:239px;height:45px;background:#fff;line-height:41px;">TRANSPORTATION</div>
<div class="grow" style="top:386px;background:#3e9ea2"></div>
<div class="gbtn" style="left:807px;top:391px;width:239px;height:45px;background:#fff;line-height:41px;">FIXED ROUTE</div>
<div class="grow" style="top:446px;background:#3e9ea2"></div>
<div class="gbtn" style="left:807px;top:451px;width:239px;height:45px;background:#fff;line-height:41px;">MAINTENANCE</div>
<div class="grow" style="top:506px;background:#d46400"></div>
<div class="gbtn" style="left:807px;top:511px;width:239px;height:45px;background:#ececec;line-height:41px;">ALL CALL</div>
<div class="a" style="left:1056px;top:212px;width:82px;height:41px;background:#dedede;color:#000;font-weight:bold;font-size:24px;text-align:center;line-height:41px">PTT</div>

<!-- Phone -->
<div class="t" style="left:798px;top:608px;font-size:14px;color:#f0f0f0">Phone</div>
<div class="pnl" style="left:793px;top:627px;width:377px;height:106px"></div>
<div class="a" style="left:797px;top:637px;width:369px;height:46px;background:#e2e6c0;border-top:2px solid #9a9c88;border-left:2px solid #9a9c88;border-right:2px solid #fff;border-bottom:2px solid #fff"></div>
<div class="t" style="left:809px;top:641px;font-size:12px;color:#10104a">ready</div>
<div class="a" style="left:797px;top:694px;width:118px;height:28px;background:#e3e3e3;font-size:13px;color:#111;text-align:center;line-height:28px">Dial</div>
<div class="a" style="left:922px;top:694px;width:118px;height:28px;background:#cfcfcf"></div>
<div class="a" style="left:1047px;top:694px;width:118px;height:28px;background:#cfcfcf"></div>

<!-- Gateways -->
<div class="t" style="left:798px;top:738px;font-size:14px;color:#f0f0f0">Gateways</div>
<div class="pnl" style="left:793px;top:760px;width:377px;height:150px"></div>
<div class="a" style="left:793px;top:760px;width:356px;height:34px;background:#3b8eee"></div>
<div class="a" style="left:793px;top:829px;width:356px;height:1px;background:#8e9ca4"></div>
<svg class="a" style="left:795px;top:769px" width="17" height="14" viewBox="0 0 17 14">
<rect x="4.5" y="1" width="6" height="6" fill="#c8d8a0" stroke="#555" stroke-width="0.8"/><rect x="5.5" y="2" width="4" height="3" fill="#8aa868"/>
<path d="M11.5 0.5 L11.5 7 L8 9" fill="none" stroke="#000" stroke-width="1"/>
<path d="M2 8.5 L13 8.5 M0.5 11.5 L16 11.5 M8 8.5 L8 13" stroke="#000" stroke-width="1.1"/>
</svg>
<svg class="a" style="left:795px;top:804px" width="17" height="14" viewBox="0 0 17 14">
<rect x="4.5" y="1" width="6" height="6" fill="#c8d8a0" stroke="#555" stroke-width="0.8"/><rect x="5.5" y="2" width="4" height="3" fill="#8aa868"/>
<path d="M11.5 0.5 L11.5 7 L8 9" fill="none" stroke="#000" stroke-width="1"/>
<path d="M2 8.5 L13 8.5 M0.5 11.5 L16 11.5 M8 8.5 L8 13" stroke="#000" stroke-width="1.1"/>
</svg>
<div class="t" style="left:815px;top:771px;font-size:10.5px;color:#e2f25a">RgwB1</div>
<div class="t" style="left:815px;top:806px;font-size:10.5px;color:#f0f0f0">RgwWL</div>
<div class="a" style="left:989px;top:765px;width:154px;height:25px;background:#e2e6c2;border:1.5px solid #141414;border-radius:6px;color:#3c3c28;font-weight:bold;font-size:12px;text-align:center;line-height:22px">CP_ch1 DS1</div>
<div class="a" style="left:989px;top:800px;width:154px;height:25px;background:#e2e6c2;border:1.5px solid #141414;border-radius:6px;color:#3c3c28;font-weight:bold;font-size:12px;text-align:center;line-height:22px">wireline gateway</div>

<!-- AUX -->
<div class="t" style="left:1178px;top:98px;font-size:14px;color:#f0f0f0">AUX I/O</div>
<div class="pnl" style="left:1173px;top:117px;width:335px;height:793px"></div>
<div class="a" style="left:1173px;top:117px;width:312px;height:361px;background:#2d84cf"></div>
<div class="a" style="left:1173px;top:478px;width:312px;height:88px;background:#1f4f8b"></div>
<div class="a" style="left:1173px;top:205px;width:312px;height:2px;background:#e8f2fa"></div>
<div class="a" style="left:1173px;top:295px;width:312px;height:2px;background:#e8f2fa"></div>
<div class="a" style="left:1173px;top:385px;width:312px;height:2px;background:#e8f2fa"></div>
<div class="a" style="left:1173px;top:475px;width:312px;height:2px;background:#e8f2fa"></div>
<div class="a" style="left:1173px;top:565px;width:312px;height:2px;background:#e8f2fa"></div>
<div class="lbl" style="left:1176px;top:120px;font-size:14px;letter-spacing:0.3px">Green Ridge</div>
<div class="a" style="left:1298px;top:119px;width:91px;height:42px;background:#e2e2e2;border:1px solid #f0f4f8;color:#000;font-weight:bold;font-size:13px;letter-spacing:0.2px;text-align:center;line-height:41px;white-space:nowrap">Pump 1 OFF</div>
<div class="a" style="left:1393px;top:120px;width:90px;height:40px;background:#e2e2e2;border:1px solid #e2e2e2;color:#000;font-weight:bold;font-size:13px;letter-spacing:0.2px;text-align:center;line-height:39px;white-space:nowrap">Pump 2 OFF</div>
<div class="a" style="left:1176px;top:163px;width:308px;height:40px;background:#ff8000;border:1px solid #f0f4f8;color:#ffe6b0;font-weight:bold;font-size:14px;letter-spacing:0.4px;text-align:center;line-height:39px;white-space:nowrap">Pump 3 OFF</div>
<div class="lbl" style="left:1176px;top:210px;font-size:14px;letter-spacing:0.48px">Houstonia</div>
<div class="a" style="left:1299px;top:210px;width:184px;height:40px;background:#e2e2e2;border:1px solid #e2e2e2;color:#000;font-weight:bold;font-size:13.3px;letter-spacing:0px;text-align:center;line-height:39px;white-space:nowrap">Open gate</div>
<div class="a" style="left:1176px;top:253px;width:153px;height:40px;background:#ff0000;border:1px solid #f0f4f8;color:#ffe8e0;font-weight:bold;font-size:14px;letter-spacing:0.38px;text-align:center;line-height:39px;white-space:nowrap">North door closed</div>
<div class="a" style="left:1331px;top:253px;width:153px;height:40px;background:#ff0000;border:1px solid #f0f4f8;color:#ffe8e0;font-weight:bold;font-size:14px;letter-spacing:0.38px;text-align:center;line-height:39px;white-space:nowrap">South door closed</div>
<div class="lbl" style="left:1176px;top:300px;font-size:14px;letter-spacing:0.55px">Hughesville</div>
<div class="a" style="left:1176px;top:343px;width:101px;height:40px;background:#ff0000;border:1px solid #f0f4f8;color:#ffe8e0;font-weight:bold;font-size:14px;letter-spacing:0.27px;text-align:center;line-height:39px;white-space:nowrap">Closed1</div>
<div class="a" style="left:1279px;top:343px;width:101px;height:40px;background:#00aa00;border:1px solid #f0f4f8;color:#e6ffd0;font-weight:bold;font-size:14px;letter-spacing:0.27px;text-align:center;line-height:39px;white-space:nowrap">Closed3</div>
<div class="a" style="left:1382px;top:343px;width:102px;height:40px;background:#00aa00;border:1px solid #f0f4f8;color:#e6ffd0;font-weight:bold;font-size:14px;letter-spacing:0.27px;text-align:center;line-height:39px;white-space:nowrap">Closed5</div>
<div class="lbl" style="left:1176px;top:390px;font-size:14px;letter-spacing:0.42px">TestMobile</div>
<div class="a" style="left:1298px;top:389px;width:91px;height:42px;background:#e2e2e2;border:1px solid #f0f4f8;color:#000;font-weight:normal;font-size:13.2px;letter-spacing:0px;text-align:center;line-height:41px;white-space:nowrap">LO2</div>
<div class="a" style="left:1393px;top:390px;width:89px;height:40px;background:#e2e2e2;border:1px solid #e2e2e2;color:#000;font-weight:normal;font-size:13.2px;letter-spacing:0px;text-align:center;line-height:39px;white-space:nowrap">LO3</div>
<div class="a" style="left:1176px;top:433px;width:309px;height:40px;background:#ff8040;border:1px solid #f0f4f8;color:#ffe8d0;font-weight:bold;font-size:14px;letter-spacing:0.3px;text-align:center;line-height:39px;white-space:nowrap">LO1</div>
<div class="t" style="left:1176px;top:481px;font-size:14px;font-weight:bold;color:#f4f4f4">ALL AUX</div>
<div class="a" style="left:1366px;top:480px;width:116px;height:83px;background:#e2e2e2;border:1px solid #e2e2e2;color:#111;font-weight:normal;font-size:13.5px;letter-spacing:0.3px;text-align:center;line-height:81px;white-space:nowrap">ALL ACTIONS</div>

<!-- Calls -->
<div class="a" style="left:7px;top:737px;width:123px;height:26px;background:#7d7d7d;border-top:2px solid #f2f2f2;border-left:2px solid #f2f2f2;border-right:1px solid #333"></div>
<div class="t" style="left:12px;top:744px;font-size:11.7px;font-weight:bold;color:#2ee0dc">Incoming calls</div>
<div class="a" style="left:130px;top:739px;width:124px;height:21px;background:#7b7b7b;border-top:1px solid #c6c6c6;border-right:1px solid #c0c0c0"></div>
<div class="t" style="left:137px;top:743px;font-size:12.4px;color:#b8b8b8">Text messages</div>
<div class="a" style="left:130px;top:760px;width:660px;height:2px;background:#e6eaea"></div>
<div class="a" style="left:301px;top:737px;width:20px;height:20px;background:#dfe3e6;border:1px solid #f4f6f6;border-right-color:#8a9094;border-bottom-color:#8a9094"></div>
<div class="a" style="left:327px;top:737px;width:20px;height:20px;background:#c9cdd0;border:1px solid #f4f6f6;border-right-color:#8a9094;border-bottom-color:#8a9094"></div>
<div class="a" style="left:367px;top:737px;width:20px;height:20px;background:#dfe3e6;border:1px solid #f4f6f6;border-right-color:#8a9094;border-bottom-color:#8a9094"></div>
<svg class="a" style="left:301px;top:737px" width="20" height="20"><path d="M6 5 L15 10 L6 15Z" fill="#000"/></svg>
<svg class="a" style="left:327px;top:737px" width="20" height="20"><rect x="7" y="7" width="6" height="6" fill="#a8acae"/></svg>
<svg class="a" style="left:367px;top:737px" width="20" height="20"><path d="M5 14.5 L10 5 L15 14.5Z" fill="#000"/></svg>
<div class="a" style="left:7px;top:762px;width:783px;height:149px;background:#2c383e"></div><div class="a" style="left:7px;top:762px;width:2px;height:149px;background:#e8ecec"></div>
<div class="a" style="left:8px;top:764px;width:763px;height:24px;background:#fff"></div>
<div class="a" style="left:148px;top:764px;width:1px;height:24px;background:#e4e4e4"></div>
<div class="a" style="left:260px;top:764px;width:1px;height:24px;background:#e4e4e4"></div>
<div class="t" style="left:15px;top:771px;font-size:10.5px;color:#111">Time</div>
<div class="t" style="left:155px;top:771px;font-size:10.5px;color:#111">Caller</div>
<div class="t" style="left:267px;top:771px;font-size:10.5px;color:#111">Call type</div>
<div class="a" style="left:8px;top:788px;width:763px;height:121px;background:#4a5861"></div>
<div class="a" style="left:771px;top:764px;width:18px;height:145px;background:#f0f0f0"></div>
<div class="a" style="left:772px;top:789px;width:16px;height:17px;background:#cdcdcd"></div>
<svg class="a" style="left:771px;top:766px" width="18" height="14"><path d="M5 9 L9 5 L13 9" fill="none" stroke="#555" stroke-width="1.6"/></svg>
<svg class="a" style="left:771px;top:893px" width="18" height="14"><path d="M5 5 L9 9 L13 5" fill="none" stroke="#555" stroke-width="1.6"/></svg>
<div class="a" style="left:12px;top:805px;width:756px;height:17px;background:#0078d7;border:1px dotted #c8dcf0"></div>
<div class="t" style="left:15px;top:792px;font-size:10.8px;color:#eeeeee">05/03/2023[18:31:09]</div>
<div class="t" style="left:156px;top:792px;font-size:10.8px;color:#eeeeee">Tom R7.2020</div>
<div class="t" style="left:267px;top:792px;font-size:10.8px;color:#eeeeee">Group call [ENG1]</div>
<div class="t" style="left:15px;top:809px;font-size:10.8px;color:#ffffff">05/03/2023[18:30:50]</div>
<div class="t" style="left:156px;top:809px;font-size:10.8px;color:#ffffff">Tom R7.2020</div>
<div class="t" style="left:267px;top:809px;font-size:10.8px;color:#ffffff">Group call [ENG1]</div>
<div class="t" style="left:15px;top:826px;font-size:10.8px;color:#2cd2cc">05/03/2023[16:54:08]</div>
<div class="t" style="left:156px;top:826px;font-size:10.8px;color:#2cd2cc">John Smedley</div>
<div class="t" style="left:267px;top:826px;font-size:10.8px;color:#2cd2cc">Telephone call [568]</div>
<div class="t" style="left:15px;top:843px;font-size:10.8px;color:#eeeeee">05/02/2023[01:00:42]</div>
<div class="t" style="left:156px;top:843px;font-size:10.8px;color:#eeeeee">Tom R7.2020</div>
<div class="t" style="left:267px;top:843px;font-size:10.8px;color:#eeeeee">Group call [ENTR1]</div>
<div class="t" style="left:15px;top:860px;font-size:10.8px;color:#e2ec40">05/02/2023[01:00:29]</div>
<div class="t" style="left:156px;top:860px;font-size:10.8px;color:#e2ec40">Tom R7.2020</div>
<div class="t" style="left:267px;top:860px;font-size:10.8px;color:#e2ec40">Private call</div>
<div class="t" style="left:15px;top:877px;font-size:10.8px;color:#e2ec40">05/02/2023[01:00:22]</div>
<div class="t" style="left:156px;top:877px;font-size:10.8px;color:#e2ec40">Tom R7.2020</div>
<div class="t" style="left:267px;top:877px;font-size:10.8px;color:#e2ec40">Private call</div>
<div class="t" style="left:15px;top:894px;font-size:10.8px;color:#e2ec40">05/02/2023[01:00:19]</div>
<div class="t" style="left:156px;top:894px;font-size:10.8px;color:#e2ec40">Tom R7.2020</div>
<div class="t" style="left:267px;top:894px;font-size:10.8px;color:#e2ec40">Private call</div>
<div class="a" style="left:7px;top:909px;width:783px;height:2px;background:#dfe3e3"></div>

<!-- status bar -->
<div class="a" style="left:3px;top:913px;width:1508px;height:25px;background:#f0f0f0"></div><div class="a" style="left:3px;top:936px;width:1508px;height:2px;background:#5c5c5c"></div>
<div class="a" style="left:5px;top:917px;width:1476px;height:19px;background:#f0f0f2;border-top:2px solid #5a5a5a;border-left:1px solid #8a8a8a"></div><div class="a" style="left:1481px;top:917px;width:2px;height:19px;background:#d2d2d2"></div><svg class="a" style="left:1496px;top:922px" width="15" height="14"><g fill="#9a9a9a"><rect x="10" y="2" width="2" height="2"/><rect x="6" y="6" width="2" height="2"/><rect x="10" y="6" width="2" height="2"/><rect x="2" y="10" width="2" height="2"/><rect x="6" y="10" width="2" height="2"/><rect x="10" y="10" width="2" height="2"/></g></svg>
<div class="t" style="left:11px;top:921px;font-size:12px;color:#111">ready</div>
</body></html>
